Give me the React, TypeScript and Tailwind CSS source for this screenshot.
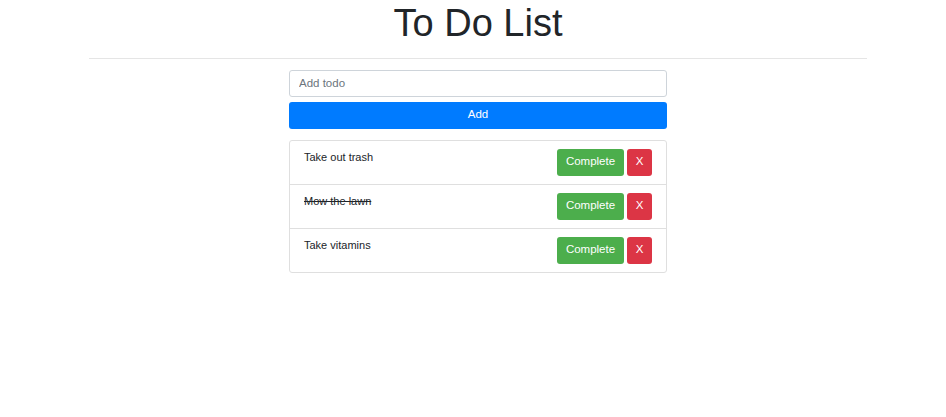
const todos = [
  { id: 1, title: 'Take out trash', completed: false },
  { id: 2, title: 'Mow the lawn', completed: true },
  { id: 3, title: 'Take vitamins', completed: false },
];

export default function App() {
  return (
    <div className="min-h-screen bg-white text-[#212529] font-['Liberation_Sans',Arial,sans-serif] pl-[89px] pr-[79px] pt-px">
      {/* Header */}
      <h1 className="text-center text-[38px] leading-[1.2] font-normal">To Do List</h1>
      <hr className="mt-[11px] border-t border-[#e5e5e5]" />

      <div className="w-[378px] mx-auto mt-[11px]">
        {/* Add form */}
        <input
          type="text"
          placeholder="Add todo"
          className="block w-full h-[27px] px-[9px] text-[11.5px] border border-[#ced4da] rounded-[3px] placeholder:text-[#6c757d] outline-none"
        />
        <button className="mt-[5px] w-full h-[27px] bg-[#007bff] text-white text-[11.5px] rounded-[3px]">
          Add
        </button>

        {/* List */}
        <ul className="mt-[11px] border border-[#dfdfdf] rounded-[3px]">
          {todos.map((todo, i) => (
            <li
              key={todo.id}
              className={`flex items-start justify-between py-2 pl-[14px] pr-[14px] ${i > 0 ? 'border-t border-[#dfdfdf]' : ''}`}
            >
              <span className={`text-[11px] leading-[1.5] ${todo.completed ? 'line-through' : ''}`}>
                {todo.title}
              </span>
              <div className="flex gap-[3px]">
                <button className="h-[27px] w-[67px] bg-[#4cae4c] text-white text-[11.5px] rounded-[3px]">
                  Complete
                </button>
                <button className="h-[27px] w-[25px] bg-[#dc3545] text-white text-[11.5px] rounded-[3px]">
                  X
                </button>
              </div>
            </li>
          ))}
        </ul>
      </div>
    </div>
  );
}
